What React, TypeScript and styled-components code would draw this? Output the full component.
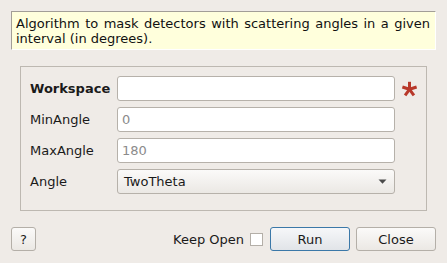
import React from "react";
import styled, { createGlobalStyle } from "styled-components";

const Global = createGlobalStyle`
  html, body { margin: 0; padding: 0; background: #efebe7; }
  body {
    font-family: "DejaVu Sans", "Liberation Sans", sans-serif;
    font-size: 13px;
    color: #1a1a1a;
    width: 447px;
    height: 263px;
    overflow: hidden;
  }
  * { box-sizing: border-box; }
`;

const Dialog = styled.div`
  display: flex;
  flex-direction: column;
  padding: 11px 11px 12px 11px;
  height: 263px;
`;

const Description = styled.div`
  background: #ffffdc;
  border-top: 1px solid #a29e97;
  border-left: 1px solid #a29e97;
  border-right: 1px solid #ffffff;
  border-bottom: 1px solid #ffffff;
  padding: 4px 5px 3px 4px;
  height: 39px;
  color: #111;
`;

const DescLine = styled.div<{ $fill?: boolean }>`
  line-height: 15px;
  white-space: nowrap;
  text-align: ${(p) => (p.$fill ? "justify" : "left")};
  text-align-last: ${(p) => (p.$fill ? "justify" : "left")};
`;

const Group = styled.div`
  margin: 16px 9px 0 9px;
  border: 1px solid #bdb8b1;
  padding: 9px 0 16px 9px;
  display: grid;
  grid-template-columns: 87px 278px 31px;
  grid-auto-rows: 25px;
  row-gap: 6px;
  align-items: center;
`;

const Label = styled.div<{ $bold?: boolean }>`
  font-weight: ${(p) => (p.$bold ? "bold" : "normal")};
  color: #1a1a1a;
  line-height: 15px;
`;

const Field = styled.div<{ $muted?: boolean }>`
  height: 25px;
  background: #ffffff;
  border: 1px solid #b6b1aa;
  border-radius: 3px;
  padding: 0 4px;
  display: flex;
  align-items: center;
  color: ${(p) => (p.$muted ? "#8b8b8b" : "#1a1a1a")};
`;

const Combo = styled.div`
  height: 25px;
  background: linear-gradient(#fbfaf9, #ebe8e4);
  border: 1px solid #b6b1aa;
  border-radius: 3px;
  padding: 0 7px 0 6px;
  display: flex;
  align-items: center;
  justify-content: space-between;
  color: #1a1a1a;
`;

const Marker = styled.div`
  display: flex;
  align-items: center;
  padding-left: 6px;
  height: 25px;
`;

const Footer = styled.div`
  margin-top: 16px;
  display: flex;
  align-items: center;
  height: 24px;
`;

const Button = styled.button<{ $default?: boolean; $w: number }>`
  width: ${(p) => p.$w}px;
  height: 24px;
  font-family: inherit;
  font-size: 13px;
  color: #1a1a1a;
  border-radius: 3px;
  padding: 0;
  border: 1px solid ${(p) => (p.$default ? "#3b78a8" : "#b4afa8")};
  background: ${(p) =>
    p.$default
      ? "linear-gradient(#f6f7f9, #e1e4e8)"
      : "linear-gradient(#fbfaf9, #ebe8e4)"};
`;

const Spacer = styled.div`
  flex: 1;
`;

const CheckLabel = styled.span`
  margin-right: 6px;
  line-height: 15px;
`;

const Check = styled.span`
  width: 13px;
  height: 13px;
  background: #fff;
  border: 1px solid #b4afa8;
  margin-right: 7px;
`;

const Gap = styled.span`
  width: 6px;
`;

const Star = () => (
  <svg width="17" height="16" viewBox="0 0 17 16">
    <g stroke="#b8382a" strokeWidth="3" strokeLinecap="butt" transform="translate(8.5 8.3)">
      {[0, 72, 144, 216, 288].map((a) => (
        <line key={a} x1="0" y1="0" x2="0" y2="-7.5" transform={`rotate(${a})`} />
      ))}
    </g>
  </svg>
);

const Arrow = () => (
  <svg width="9" height="5" viewBox="0 0 9 5">
    <path d="M0.5 0.5 H8.5 L4.5 4.8 Z" fill="#4a4a4a" />
  </svg>
);

export default function App() {
  return (
    <>
      <Global />
      <Dialog>
        <Description>
          <DescLine $fill>Algorithm to mask detectors with scattering angles in a given</DescLine>
          <DescLine>interval (in degrees).</DescLine>
        </Description>
        <Group>
          <Label $bold>Workspace</Label>
          <Field />
          <Marker>
            <Star />
          </Marker>
          <Label>MinAngle</Label>
          <Field $muted>0</Field>
          <span />
          <Label>MaxAngle</Label>
          <Field $muted>180</Field>
          <span />
          <Label>Angle</Label>
          <Combo>
            <span>TwoTheta</span>
            <Arrow />
          </Combo>
          <span />
        </Group>
        <Footer>
          <Button $w={25}>?</Button>
          <Spacer />
          <CheckLabel>Keep Open</CheckLabel>
          <Check />
          <Button $w={80} $default>
            Run
          </Button>
          <Gap />
          <Button $w={80}>Close</Button>
        </Footer>
      </Dialog>
    </>
  );
}
